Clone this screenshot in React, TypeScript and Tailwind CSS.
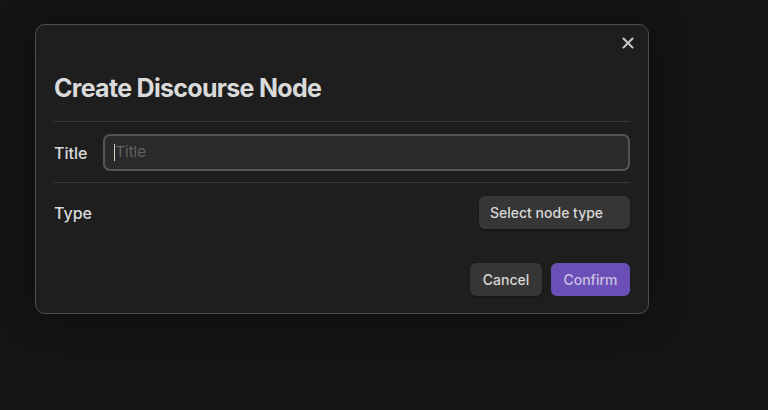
import React from 'react';
import { X } from 'lucide-react';

export default function App() {
  return (
    <div
      className="min-h-[410px] w-full bg-[#151515] pl-[35px] pt-[24px]"
      style={{ fontFamily: 'Inter, "Noto Sans", sans-serif' }}
    >
      <div className="relative w-[614px] rounded-[10px] border border-[#4d4d4d] bg-[#1e1e1e] px-[18px] pb-[17px] pt-[47px] shadow-[0_0_40px_rgba(0,0,0,0.45)]">
        <button
          type="button"
          className="absolute right-[11px] top-[9px] flex h-[18px] w-[18px] items-center justify-center text-[#c8c8c8]"
        >
          <X className="h-[18px] w-[18px]" strokeWidth={2.6} />
        </button>

        <h1 className="border-b border-[#363636] pb-[17px] text-[25px] font-bold leading-[32px] tracking-[-0.7px] text-[#dadada]">
          Create Discourse Node
        </h1>

        <div className="flex items-center gap-[16px] border-b border-[#363636] pb-[11px] pt-[12px]">
          <label className="text-[16px] font-medium text-[#dadada]">Title</label>
          <div className="flex h-[37px] flex-1 items-center rounded-[7px] border-2 border-[#555555] bg-[#2a2a2a] px-[9px]">
            <span className="h-[17px] w-[1px] bg-[#cfcfcf]" />
            <span className="text-[15px] text-[#616161]">Title</span>
          </div>
        </div>

        <div className="flex items-center justify-between py-[13px]">
          <span className="text-[16px] font-medium text-[#dadada]">Type</span>
          <button
            type="button"
            className="h-[33px] w-[151px] rounded-[6px] bg-[#363636] pl-[11px] text-left text-[14px] font-medium text-[#d8d8d8] shadow-[0_1px_2px_rgba(0,0,0,0.4)]"
          >
            Select node type
          </button>
        </div>

        <div className="mt-[21px] flex justify-end gap-[9px]">
          <button
            type="button"
            className="h-[33px] w-[72px] rounded-[6px] bg-[#363636] text-[14px] font-medium text-[#d8d8d8] shadow-[0_1px_2px_rgba(0,0,0,0.4)]"
          >
            Cancel
          </button>
          <button
            type="button"
            className="h-[33px] w-[79px] rounded-[6px] bg-[#6a4fb7] text-[14px] font-medium text-[#cbc2e4]"
          >
            Confirm
          </button>
        </div>
      </div>
    </div>
  );
}
